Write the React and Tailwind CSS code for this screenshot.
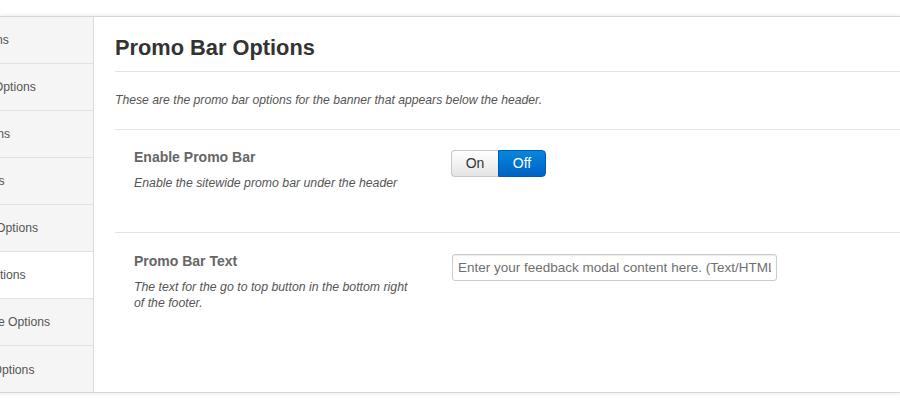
import React from 'react';

const navItems = [
  'Blog Layout Options',
  'Navigation Menu Options',
  'Social Icons Options',
  'Shop Page Options',
  'Go To Top Button Options',
  'Top Promo Bar Options',
  'Coming Soon Page Options',
  'Feedback Modal Options',
];

const ACTIVE = 5;

function Sidebar() {
  return (
    <div className="w-[94px] shrink-0 overflow-hidden border-r border-[#dcdcdc] bg-[#f5f5f5]">
      <div className="-ml-[101px] w-[195px]">
        {navItems.map((label, i) => (
          <div
            key={label}
            className={`flex h-[47px] items-center whitespace-nowrap pt-[1px] text-[12.2px] text-[#555] ${
              i < navItems.length - 1 ? 'border-b border-[#e1e1e1]' : ''
            } ${i === ACTIVE ? 'bg-white' : ''}`}
          >
            {label}
          </div>
        ))}
      </div>
    </div>
  );
}

function Toggle() {
  return (
    <div className="flex h-[27px] text-[14px]">
      <button className="w-[47px] rounded-l-[4px] border border-r-0 border-[#c8c8c8] bg-gradient-to-b from-white to-[#e4e4e4] text-[#333]">
        On
      </button>
      <button className="w-[48px] rounded-r-[4px] border border-[#0058b8] bg-gradient-to-b from-[#0a86dc] to-[#0062c6] text-white">
        Off
      </button>
    </div>
  );
}

function SettingRow({ title, desc, children, last }) {
  return (
    <div className={`flex ${last ? 'flex-1' : 'h-[103px] border-b border-[#e3e3e3]'}`}>
      <div className={`w-[336px] shrink-0 pl-[19px] ${last ? 'pt-[18px]' : 'pt-[17px]'}`}>
        <div className="text-[14px] font-bold leading-[20px] text-[#666]">{title}</div>
        <div className={`mt-[7px] w-[278px] text-[12.3px] italic text-[#555] ${last ? 'leading-[16px] pt-[1px]' : 'leading-[18px]'}`}>
          {desc}
        </div>
      </div>
      <div className={last ? 'pt-[21px]' : 'pt-[20px]'}>{children}</div>
    </div>
  );
}

export default function App() {
  return (
    <div className="h-[409px] w-[900px] bg-white pt-[16px] font-['Liberation_Sans',Arial,sans-serif]">
      <div className="flex h-[377px] border-y border-[#d6d6d6] bg-white shadow-[0_0_4px_rgba(0,0,0,0.12)]">
        <Sidebar />
        <div className="flex flex-1 flex-col pl-[21px]">
          <h1 className="border-b border-[#e3e3e3] pt-[17px] pb-[9px] text-[21.8px] font-bold leading-[28px] text-[#333]">
            Promo Bar Options
          </h1>
          <p className="border-b border-[#e3e3e3] pt-[19px] pb-[20px] text-[12.2px] italic leading-[18px] text-[#555]">
            These are the promo bar options for the banner that appears below the header.
          </p>
          <SettingRow title="Enable Promo Bar" desc="Enable the sitewide promo bar under the header">
            <Toggle />
          </SettingRow>
          <SettingRow
            last
            title="Promo Bar Text"
            desc="The text for the go to top button in the bottom right of the footer."
          >
            <input
              readOnly
              value="Enter your feedback modal content here. (Text/HTML/Shortcodes accepted)"
              className="ml-[1px] h-[27px] w-[325px] rounded-[3px] border border-[#cccccc] px-[5px] text-[13.5px] text-[#6f6f6f] shadow-[inset_0_1px_1px_rgba(0,0,0,0.075)] outline-none"
            />
          </SettingRow>
        </div>
      </div>
    </div>
  );
}
